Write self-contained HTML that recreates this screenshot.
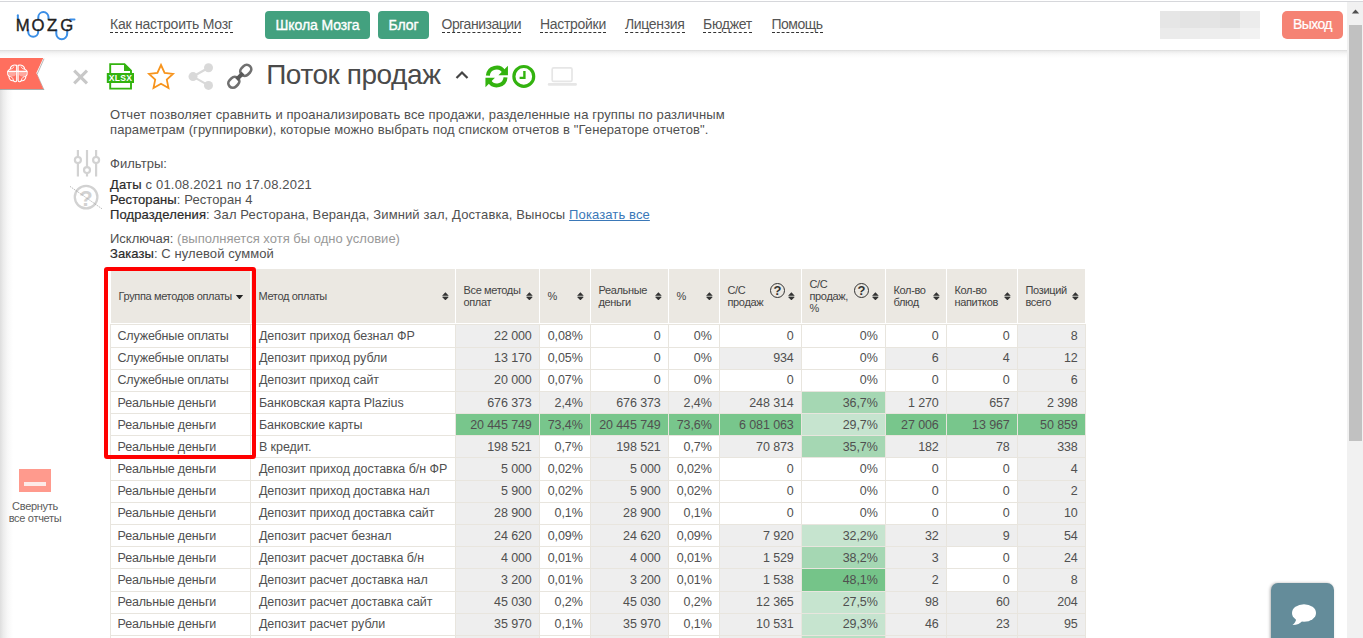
<!DOCTYPE html>
<html lang="ru">
<head>
<meta charset="utf-8">
<title>Поток продаж</title>
<style>
*{box-sizing:border-box;margin:0;padding:0}
html,body{width:1363px;height:638px;overflow:hidden;background:#fff}
body{font-family:"Liberation Sans",sans-serif;color:#444;position:relative;font-size:13px}
.abs{position:absolute}
/* top bar */
#topline{position:absolute;left:0;top:1px;width:1363px;height:1px;background:#d6d7db}
#topbar{position:absolute;left:0;top:2px;width:1347px;height:48px;background:#fff}
#tbshadow{position:absolute;left:0;top:50px;width:1347px;height:8px;background:linear-gradient(180deg,#dadada 0,#ececec 18%,#f6f6f6 45%,#fcfcfc 75%,#fff 100%)}
.nav{position:absolute;top:16px;font-size:14px;line-height:16px;color:#555;white-space:nowrap;border-bottom:1px dashed #333;height:17px;letter-spacing:-0.3px}
.btn{position:absolute;top:11px;height:28px;border-radius:4px;color:#fff;font-size:14px;line-height:28px;text-align:center;white-space:nowrap;letter-spacing:-0.1px;-webkit-text-stroke:0.35px #fff}
.g{background:#43a17f}
.rd{background:#f58374}
#blur{position:absolute;left:1160px;top:11px;width:100px;height:28px;background:#ebebeb}
#blur i{position:absolute;display:block;width:20px}
#blur i.a{top:0;height:17px}
#blur i.b{top:17px;height:11px}
/* left edge shadow */
#lshadow{position:absolute;left:0;top:89px;width:13px;height:549px;background:linear-gradient(90deg,#dedede 0,#ececec 25%,#f8f8f8 60%,#fff 100%)}
/* scrollbar */
#sb{position:absolute;left:1347px;top:2px;width:16px;height:636px;background:#f1f1f1}
#sbthumb{position:absolute;left:1349px;top:25px;width:13px;height:416px;background:#c1c1c1}
/* title */
#title{position:absolute;left:266.200px;top:58.300px;font-size:28px;line-height:34px;color:#4a4a4a;white-space:nowrap;letter-spacing:-0.44px}
.p{position:absolute;left:110px;font-size:13px;line-height:15px;white-space:nowrap;color:#505050;letter-spacing:0.11px}
.p b{font-weight:normal;color:#2a2a2a;-webkit-text-stroke:0.2px #2a2a2a}
.p a{color:#3a78b8;text-decoration:underline}
.p .m{color:#999}
/* table */
.th{position:absolute;background:#ebe8e2;font-size:11px;line-height:12.3px;color:#444;letter-spacing:-0.35px}
.th .ht{position:absolute;left:7.5px;top:50%;transform:translateY(-50%);white-space:nowrap}
.srt{position:absolute;right:5.800px;top:50%;margin-top:-3.900px;width:6.800px;height:8.600px;fill:#333}
.srtd{position:absolute;right:6.500px;top:50%;margin-top:-1px;width:9px;height:4.500px;fill:#222}
.hq{position:absolute;right:15.800px;top:13.600px;width:15.700px;height:15.700px;border:1.400px solid #333;border-radius:50%;font-size:13px;line-height:13px;text-align:center;font-weight:bold;color:#333}
.tr{position:absolute;left:0;width:1363px;height:23.18px}
.td{position:absolute;top:0;height:23.18px;border:1px solid #e8e5de;font-size:12.500px;line-height:16px;white-space:nowrap;color:#505050;letter-spacing:-0.2px;overflow:hidden}
.td span{position:absolute;left:0;right:0;display:block;height:16px}
.td.l{background:#fff;letter-spacing:-0.16px}
.td.l span{padding-left:6.500px}
.td.l2{letter-spacing:-0.05px}
.td.l2 span{padding-left:7.900px}
.td.r{text-align:right;letter-spacing:-0.1px}
.td.r span{padding-right:7.300px}
#redbox{position:absolute;left:104px;top:267px;width:152px;height:192px;border:4px solid #f00;border-radius:3px}
/* sidebar */
#collapse{position:absolute;left:19px;top:469px;width:32px;height:22.600px;background:#ff9a8d}
#collapse i{position:absolute;left:5px;top:12.500px;width:22px;height:4px;background:#fdebe8;display:block}
#colltxt{position:absolute;left:0;top:500px;width:70px;text-align:center;font-size:11px;line-height:12px;color:#5c5c5c;letter-spacing:-0.3px}
#chat{position:absolute;left:1271px;top:583px;width:63px;height:70px;border-radius:7px;background:#648c9a;box-shadow:-1px 0 3px rgba(0,0,0,.3)}
</style>
</head>
<body>
<div id="lshadow"></div>
<div class="th" style="left:111px;width:139.0px;top:269.0px;height:53.5px"><span class="ht">Группа методов оплаты</span><svg class="srtd" viewBox="0 0 8 5"><path d="M0 0 H8 L4 5 Z"/></svg></div>
<div class="th" style="left:251px;width:204.0px;top:269.0px;height:53.5px"><span class="ht">Метод оплаты</span><svg class="srt" viewBox="0 0 8 10"><rect x="0.600" y="4.300" width="6.800" height="1.400" fill="#9a9c98"/><path d="M4 0.200 L7.900 4.300 H0.100 Z M4 9.800 L7.900 5.700 H0.100 Z"/></svg></div>
<div class="th" style="left:456px;width:83.0px;top:269.0px;height:53.5px"><span class="ht">Все методы<br>оплат</span><svg class="srt" viewBox="0 0 8 10"><rect x="0.600" y="4.300" width="6.800" height="1.400" fill="#9a9c98"/><path d="M4 0.200 L7.900 4.300 H0.100 Z M4 9.800 L7.900 5.700 H0.100 Z"/></svg></div>
<div class="th" style="left:540px;width:50.0px;top:269.0px;height:53.5px"><span class="ht">%</span><svg class="srt" viewBox="0 0 8 10"><rect x="0.600" y="4.300" width="6.800" height="1.400" fill="#9a9c98"/><path d="M4 0.200 L7.900 4.300 H0.100 Z M4 9.800 L7.900 5.700 H0.100 Z"/></svg></div>
<div class="th" style="left:591px;width:77.0px;top:269.0px;height:53.5px"><span class="ht">Реальные<br>деньги</span><svg class="srt" viewBox="0 0 8 10"><rect x="0.600" y="4.300" width="6.800" height="1.400" fill="#9a9c98"/><path d="M4 0.200 L7.900 4.300 H0.100 Z M4 9.800 L7.900 5.700 H0.100 Z"/></svg></div>
<div class="th" style="left:669px;width:50.0px;top:269.0px;height:53.5px"><span class="ht">%</span><svg class="srt" viewBox="0 0 8 10"><rect x="0.600" y="4.300" width="6.800" height="1.400" fill="#9a9c98"/><path d="M4 0.200 L7.900 4.300 H0.100 Z M4 9.800 L7.900 5.700 H0.100 Z"/></svg></div>
<div class="th" style="left:720px;width:81.0px;top:269.0px;height:53.5px"><span class="ht">С/С<br>продаж</span><svg class="srt" viewBox="0 0 8 10"><rect x="0.600" y="4.300" width="6.800" height="1.400" fill="#9a9c98"/><path d="M4 0.200 L7.900 4.300 H0.100 Z M4 9.800 L7.900 5.700 H0.100 Z"/></svg><span class="hq">?</span></div>
<div class="th" style="left:802px;width:83.0px;top:269.0px;height:53.5px"><span class="ht">С/С<br>продаж,<br>%</span><svg class="srt" viewBox="0 0 8 10"><rect x="0.600" y="4.300" width="6.800" height="1.400" fill="#9a9c98"/><path d="M4 0.200 L7.900 4.300 H0.100 Z M4 9.800 L7.900 5.700 H0.100 Z"/></svg><span class="hq">?</span></div>
<div class="th" style="left:886px;width:60.0px;top:269.0px;height:53.5px"><span class="ht">Кол-во<br>блюд</span><svg class="srt" viewBox="0 0 8 10"><rect x="0.600" y="4.300" width="6.800" height="1.400" fill="#9a9c98"/><path d="M4 0.200 L7.900 4.300 H0.100 Z M4 9.800 L7.900 5.700 H0.100 Z"/></svg></div>
<div class="th" style="left:947px;width:70.0px;top:269.0px;height:53.5px"><span class="ht">Кол-во<br>напитков</span><svg class="srt" viewBox="0 0 8 10"><rect x="0.600" y="4.300" width="6.800" height="1.400" fill="#9a9c98"/><path d="M4 0.200 L7.900 4.300 H0.100 Z M4 9.800 L7.900 5.700 H0.100 Z"/></svg></div>
<div class="th" style="left:1018px;width:67.0px;top:269.0px;height:53.5px"><span class="ht">Позиций<br>всего</span><svg class="srt" viewBox="0 0 8 10"><rect x="0.600" y="4.300" width="6.800" height="1.400" fill="#9a9c98"/><path d="M4 0.200 L7.900 4.300 H0.100 Z M4 9.800 L7.900 5.700 H0.100 Z"/></svg></div>
<div class="tr" style="top:324.40px">
<div class="td l" style="left:110px;width:141px"><span style="top:2.60px">Служебные оплаты</span></div>
<div class="td l l2" style="left:250px;width:206px"><span style="top:2.60px">Депозит приход безнал ФР</span></div>
<div class="td r" style="left:455px;width:85px;background:#eeeeee"><span style="top:2.60px">22 000</span></div>
<div class="td r" style="left:539px;width:52px;background:#ffffff"><span style="top:2.60px">0,08%</span></div>
<div class="td r" style="left:590px;width:79px;background:#ffffff"><span style="top:2.60px">0</span></div>
<div class="td r" style="left:668px;width:52px;background:#ffffff"><span style="top:2.60px">0%</span></div>
<div class="td r" style="left:719px;width:83px;background:#ffffff"><span style="top:2.60px">0</span></div>
<div class="td r" style="left:801px;width:85px;background:#ffffff"><span style="top:2.60px">0%</span></div>
<div class="td r" style="left:885px;width:62px;background:#ffffff"><span style="top:2.60px">0</span></div>
<div class="td r" style="left:946px;width:72px;background:#ffffff"><span style="top:2.60px">0</span></div>
<div class="td r" style="left:1017px;width:69px;background:#eeeeee"><span style="top:2.60px">8</span></div>
</div>
<div class="tr" style="top:346.58px">
<div class="td l" style="left:110px;width:141px"><span style="top:2.42px">Служебные оплаты</span></div>
<div class="td l l2" style="left:250px;width:206px"><span style="top:2.42px">Депозит приход рубли</span></div>
<div class="td r" style="left:455px;width:85px;background:#eeeeee"><span style="top:2.42px">13 170</span></div>
<div class="td r" style="left:539px;width:52px;background:#ffffff"><span style="top:2.42px">0,05%</span></div>
<div class="td r" style="left:590px;width:79px;background:#ffffff"><span style="top:2.42px">0</span></div>
<div class="td r" style="left:668px;width:52px;background:#ffffff"><span style="top:2.42px">0%</span></div>
<div class="td r" style="left:719px;width:83px;background:#eeeeee"><span style="top:2.42px">934</span></div>
<div class="td r" style="left:801px;width:85px;background:#ffffff"><span style="top:2.42px">0%</span></div>
<div class="td r" style="left:885px;width:62px;background:#eeeeee"><span style="top:2.42px">6</span></div>
<div class="td r" style="left:946px;width:72px;background:#eeeeee"><span style="top:2.42px">4</span></div>
<div class="td r" style="left:1017px;width:69px;background:#eeeeee"><span style="top:2.42px">12</span></div>
</div>
<div class="tr" style="top:368.76px">
<div class="td l" style="left:110px;width:141px"><span style="top:2.24px">Служебные оплаты</span></div>
<div class="td l l2" style="left:250px;width:206px"><span style="top:2.24px">Депозит приход сайт</span></div>
<div class="td r" style="left:455px;width:85px;background:#eeeeee"><span style="top:2.24px">20 000</span></div>
<div class="td r" style="left:539px;width:52px;background:#ffffff"><span style="top:2.24px">0,07%</span></div>
<div class="td r" style="left:590px;width:79px;background:#ffffff"><span style="top:2.24px">0</span></div>
<div class="td r" style="left:668px;width:52px;background:#ffffff"><span style="top:2.24px">0%</span></div>
<div class="td r" style="left:719px;width:83px;background:#ffffff"><span style="top:2.24px">0</span></div>
<div class="td r" style="left:801px;width:85px;background:#ffffff"><span style="top:2.24px">0%</span></div>
<div class="td r" style="left:885px;width:62px;background:#ffffff"><span style="top:2.24px">0</span></div>
<div class="td r" style="left:946px;width:72px;background:#ffffff"><span style="top:2.24px">0</span></div>
<div class="td r" style="left:1017px;width:69px;background:#eeeeee"><span style="top:2.24px">6</span></div>
</div>
<div class="tr" style="top:390.94px">
<div class="td l" style="left:110px;width:141px"><span style="top:3.06px">Реальные деньги</span></div>
<div class="td l l2" style="left:250px;width:206px"><span style="top:3.06px">Банковская карта Plazius</span></div>
<div class="td r" style="left:455px;width:85px;background:#eeeeee"><span style="top:3.06px">676 373</span></div>
<div class="td r" style="left:539px;width:52px;background:#eeeeee"><span style="top:3.06px">2,4%</span></div>
<div class="td r" style="left:590px;width:79px;background:#eeeeee"><span style="top:3.06px">676 373</span></div>
<div class="td r" style="left:668px;width:52px;background:#eeeeee"><span style="top:3.06px">2,4%</span></div>
<div class="td r" style="left:719px;width:83px;background:#eeeeee"><span style="top:3.06px">248 314</span></div>
<div class="td r" style="left:801px;width:85px;background:#a5d7b3"><span style="top:3.06px">36,7%</span></div>
<div class="td r" style="left:885px;width:62px;background:#eeeeee"><span style="top:3.06px">1 270</span></div>
<div class="td r" style="left:946px;width:72px;background:#eeeeee"><span style="top:3.06px">657</span></div>
<div class="td r" style="left:1017px;width:69px;background:#eeeeee"><span style="top:3.06px">2 398</span></div>
</div>
<div class="tr" style="top:413.12px">
<div class="td l" style="left:110px;width:141px"><span style="top:2.88px">Реальные деньги</span></div>
<div class="td l l2" style="left:250px;width:206px"><span style="top:2.88px">Банковские карты</span></div>
<div class="td r" style="left:455px;width:85px;background:#78c68c"><span style="top:2.88px">20 445 749</span></div>
<div class="td r" style="left:539px;width:52px;background:#78c68c"><span style="top:2.88px">73,4%</span></div>
<div class="td r" style="left:590px;width:79px;background:#78c68c"><span style="top:2.88px">20 445 749</span></div>
<div class="td r" style="left:668px;width:52px;background:#78c68c"><span style="top:2.88px">73,6%</span></div>
<div class="td r" style="left:719px;width:83px;background:#78c68c"><span style="top:2.88px">6 081 063</span></div>
<div class="td r" style="left:801px;width:85px;background:#c6e4cf"><span style="top:2.88px">29,7%</span></div>
<div class="td r" style="left:885px;width:62px;background:#78c68c"><span style="top:2.88px">27 006</span></div>
<div class="td r" style="left:946px;width:72px;background:#78c68c"><span style="top:2.88px">13 967</span></div>
<div class="td r" style="left:1017px;width:69px;background:#78c68c"><span style="top:2.88px">50 859</span></div>
</div>
<div class="tr" style="top:435.30px">
<div class="td l" style="left:110px;width:141px"><span style="top:2.70px">Реальные деньги</span></div>
<div class="td l l2" style="left:250px;width:206px"><span style="top:2.70px">В кредит.</span></div>
<div class="td r" style="left:455px;width:85px;background:#eeeeee"><span style="top:2.70px">198 521</span></div>
<div class="td r" style="left:539px;width:52px;background:#ffffff"><span style="top:2.70px">0,7%</span></div>
<div class="td r" style="left:590px;width:79px;background:#eeeeee"><span style="top:2.70px">198 521</span></div>
<div class="td r" style="left:668px;width:52px;background:#ffffff"><span style="top:2.70px">0,7%</span></div>
<div class="td r" style="left:719px;width:83px;background:#eeeeee"><span style="top:2.70px">70 873</span></div>
<div class="td r" style="left:801px;width:85px;background:#a5d7b3"><span style="top:2.70px">35,7%</span></div>
<div class="td r" style="left:885px;width:62px;background:#eeeeee"><span style="top:2.70px">182</span></div>
<div class="td r" style="left:946px;width:72px;background:#eeeeee"><span style="top:2.70px">78</span></div>
<div class="td r" style="left:1017px;width:69px;background:#eeeeee"><span style="top:2.70px">338</span></div>
</div>
<div class="tr" style="top:457.48px">
<div class="td l" style="left:110px;width:141px"><span style="top:2.52px">Реальные деньги</span></div>
<div class="td l l2" style="left:250px;width:206px"><span style="top:2.52px">Депозит приход доставка б/н ФР</span></div>
<div class="td r" style="left:455px;width:85px;background:#eeeeee"><span style="top:2.52px">5 000</span></div>
<div class="td r" style="left:539px;width:52px;background:#ffffff"><span style="top:2.52px">0,02%</span></div>
<div class="td r" style="left:590px;width:79px;background:#eeeeee"><span style="top:2.52px">5 000</span></div>
<div class="td r" style="left:668px;width:52px;background:#ffffff"><span style="top:2.52px">0,02%</span></div>
<div class="td r" style="left:719px;width:83px;background:#ffffff"><span style="top:2.52px">0</span></div>
<div class="td r" style="left:801px;width:85px;background:#ffffff"><span style="top:2.52px">0%</span></div>
<div class="td r" style="left:885px;width:62px;background:#ffffff"><span style="top:2.52px">0</span></div>
<div class="td r" style="left:946px;width:72px;background:#ffffff"><span style="top:2.52px">0</span></div>
<div class="td r" style="left:1017px;width:69px;background:#eeeeee"><span style="top:2.52px">4</span></div>
</div>
<div class="tr" style="top:479.66px">
<div class="td l" style="left:110px;width:141px"><span style="top:2.34px">Реальные деньги</span></div>
<div class="td l l2" style="left:250px;width:206px"><span style="top:2.34px">Депозит приход доставка нал</span></div>
<div class="td r" style="left:455px;width:85px;background:#eeeeee"><span style="top:2.34px">5 900</span></div>
<div class="td r" style="left:539px;width:52px;background:#ffffff"><span style="top:2.34px">0,02%</span></div>
<div class="td r" style="left:590px;width:79px;background:#eeeeee"><span style="top:2.34px">5 900</span></div>
<div class="td r" style="left:668px;width:52px;background:#ffffff"><span style="top:2.34px">0,02%</span></div>
<div class="td r" style="left:719px;width:83px;background:#ffffff"><span style="top:2.34px">0</span></div>
<div class="td r" style="left:801px;width:85px;background:#ffffff"><span style="top:2.34px">0%</span></div>
<div class="td r" style="left:885px;width:62px;background:#ffffff"><span style="top:2.34px">0</span></div>
<div class="td r" style="left:946px;width:72px;background:#ffffff"><span style="top:2.34px">0</span></div>
<div class="td r" style="left:1017px;width:69px;background:#eeeeee"><span style="top:2.34px">2</span></div>
</div>
<div class="tr" style="top:501.84px">
<div class="td l" style="left:110px;width:141px"><span style="top:2.16px">Реальные деньги</span></div>
<div class="td l l2" style="left:250px;width:206px"><span style="top:2.16px">Депозит приход доставка сайт</span></div>
<div class="td r" style="left:455px;width:85px;background:#eeeeee"><span style="top:2.16px">28 900</span></div>
<div class="td r" style="left:539px;width:52px;background:#ffffff"><span style="top:2.16px">0,1%</span></div>
<div class="td r" style="left:590px;width:79px;background:#eeeeee"><span style="top:2.16px">28 900</span></div>
<div class="td r" style="left:668px;width:52px;background:#ffffff"><span style="top:2.16px">0,1%</span></div>
<div class="td r" style="left:719px;width:83px;background:#ffffff"><span style="top:2.16px">0</span></div>
<div class="td r" style="left:801px;width:85px;background:#ffffff"><span style="top:2.16px">0%</span></div>
<div class="td r" style="left:885px;width:62px;background:#ffffff"><span style="top:2.16px">0</span></div>
<div class="td r" style="left:946px;width:72px;background:#ffffff"><span style="top:2.16px">0</span></div>
<div class="td r" style="left:1017px;width:69px;background:#eeeeee"><span style="top:2.16px">10</span></div>
</div>
<div class="tr" style="top:524.02px">
<div class="td l" style="left:110px;width:141px"><span style="top:2.98px">Реальные деньги</span></div>
<div class="td l l2" style="left:250px;width:206px"><span style="top:2.98px">Депозит расчет безнал</span></div>
<div class="td r" style="left:455px;width:85px;background:#eeeeee"><span style="top:2.98px">24 620</span></div>
<div class="td r" style="left:539px;width:52px;background:#ffffff"><span style="top:2.98px">0,09%</span></div>
<div class="td r" style="left:590px;width:79px;background:#eeeeee"><span style="top:2.98px">24 620</span></div>
<div class="td r" style="left:668px;width:52px;background:#ffffff"><span style="top:2.98px">0,09%</span></div>
<div class="td r" style="left:719px;width:83px;background:#eeeeee"><span style="top:2.98px">7 920</span></div>
<div class="td r" style="left:801px;width:85px;background:#c6e4cf"><span style="top:2.98px">32,2%</span></div>
<div class="td r" style="left:885px;width:62px;background:#eeeeee"><span style="top:2.98px">32</span></div>
<div class="td r" style="left:946px;width:72px;background:#eeeeee"><span style="top:2.98px">9</span></div>
<div class="td r" style="left:1017px;width:69px;background:#eeeeee"><span style="top:2.98px">54</span></div>
</div>
<div class="tr" style="top:546.20px">
<div class="td l" style="left:110px;width:141px"><span style="top:2.80px">Реальные деньги</span></div>
<div class="td l l2" style="left:250px;width:206px"><span style="top:2.80px">Депозит расчет доставка б/н</span></div>
<div class="td r" style="left:455px;width:85px;background:#eeeeee"><span style="top:2.80px">4 000</span></div>
<div class="td r" style="left:539px;width:52px;background:#ffffff"><span style="top:2.80px">0,01%</span></div>
<div class="td r" style="left:590px;width:79px;background:#eeeeee"><span style="top:2.80px">4 000</span></div>
<div class="td r" style="left:668px;width:52px;background:#ffffff"><span style="top:2.80px">0,01%</span></div>
<div class="td r" style="left:719px;width:83px;background:#eeeeee"><span style="top:2.80px">1 529</span></div>
<div class="td r" style="left:801px;width:85px;background:#a5d7b3"><span style="top:2.80px">38,2%</span></div>
<div class="td r" style="left:885px;width:62px;background:#eeeeee"><span style="top:2.80px">3</span></div>
<div class="td r" style="left:946px;width:72px;background:#ffffff"><span style="top:2.80px">0</span></div>
<div class="td r" style="left:1017px;width:69px;background:#eeeeee"><span style="top:2.80px">24</span></div>
</div>
<div class="tr" style="top:568.38px">
<div class="td l" style="left:110px;width:141px"><span style="top:2.62px">Реальные деньги</span></div>
<div class="td l l2" style="left:250px;width:206px"><span style="top:2.62px">Депозит расчет доставка нал</span></div>
<div class="td r" style="left:455px;width:85px;background:#eeeeee"><span style="top:2.62px">3 200</span></div>
<div class="td r" style="left:539px;width:52px;background:#ffffff"><span style="top:2.62px">0,01%</span></div>
<div class="td r" style="left:590px;width:79px;background:#eeeeee"><span style="top:2.62px">3 200</span></div>
<div class="td r" style="left:668px;width:52px;background:#ffffff"><span style="top:2.62px">0,01%</span></div>
<div class="td r" style="left:719px;width:83px;background:#eeeeee"><span style="top:2.62px">1 538</span></div>
<div class="td r" style="left:801px;width:85px;background:#75c489"><span style="top:2.62px">48,1%</span></div>
<div class="td r" style="left:885px;width:62px;background:#eeeeee"><span style="top:2.62px">2</span></div>
<div class="td r" style="left:946px;width:72px;background:#ffffff"><span style="top:2.62px">0</span></div>
<div class="td r" style="left:1017px;width:69px;background:#eeeeee"><span style="top:2.62px">8</span></div>
</div>
<div class="tr" style="top:590.56px">
<div class="td l" style="left:110px;width:141px"><span style="top:2.44px">Реальные деньги</span></div>
<div class="td l l2" style="left:250px;width:206px"><span style="top:2.44px">Депозит расчет доставка сайт</span></div>
<div class="td r" style="left:455px;width:85px;background:#eeeeee"><span style="top:2.44px">45 030</span></div>
<div class="td r" style="left:539px;width:52px;background:#ffffff"><span style="top:2.44px">0,2%</span></div>
<div class="td r" style="left:590px;width:79px;background:#eeeeee"><span style="top:2.44px">45 030</span></div>
<div class="td r" style="left:668px;width:52px;background:#ffffff"><span style="top:2.44px">0,2%</span></div>
<div class="td r" style="left:719px;width:83px;background:#eeeeee"><span style="top:2.44px">12 365</span></div>
<div class="td r" style="left:801px;width:85px;background:#c6e4cf"><span style="top:2.44px">27,5%</span></div>
<div class="td r" style="left:885px;width:62px;background:#eeeeee"><span style="top:2.44px">98</span></div>
<div class="td r" style="left:946px;width:72px;background:#eeeeee"><span style="top:2.44px">60</span></div>
<div class="td r" style="left:1017px;width:69px;background:#eeeeee"><span style="top:2.44px">204</span></div>
</div>
<div class="tr" style="top:612.74px">
<div class="td l" style="left:110px;width:141px"><span style="top:2.26px">Реальные деньги</span></div>
<div class="td l l2" style="left:250px;width:206px"><span style="top:2.26px">Депозит расчет рубли</span></div>
<div class="td r" style="left:455px;width:85px;background:#eeeeee"><span style="top:2.26px">35 970</span></div>
<div class="td r" style="left:539px;width:52px;background:#ffffff"><span style="top:2.26px">0,1%</span></div>
<div class="td r" style="left:590px;width:79px;background:#eeeeee"><span style="top:2.26px">35 970</span></div>
<div class="td r" style="left:668px;width:52px;background:#ffffff"><span style="top:2.26px">0,1%</span></div>
<div class="td r" style="left:719px;width:83px;background:#eeeeee"><span style="top:2.26px">10 531</span></div>
<div class="td r" style="left:801px;width:85px;background:#c6e4cf"><span style="top:2.26px">29,3%</span></div>
<div class="td r" style="left:885px;width:62px;background:#eeeeee"><span style="top:2.26px">46</span></div>
<div class="td r" style="left:946px;width:72px;background:#eeeeee"><span style="top:2.26px">23</span></div>
<div class="td r" style="left:1017px;width:69px;background:#eeeeee"><span style="top:2.26px">95</span></div>
</div>
<div class="tr" style="top:634.92px">
<div class="td l" style="left:110px;width:141px"><span style="top:3.08px"></span></div>
<div class="td l l2" style="left:250px;width:206px"><span style="top:3.08px"></span></div>
<div class="td r" style="left:455px;width:85px;background:#eeeeee"><span style="top:3.08px"></span></div>
<div class="td r" style="left:539px;width:52px;background:#ffffff"><span style="top:3.08px"></span></div>
<div class="td r" style="left:590px;width:79px;background:#eeeeee"><span style="top:3.08px"></span></div>
<div class="td r" style="left:668px;width:52px;background:#ffffff"><span style="top:3.08px"></span></div>
<div class="td r" style="left:719px;width:83px;background:#eeeeee"><span style="top:3.08px"></span></div>
<div class="td r" style="left:801px;width:85px;background:#b8dfc3"><span style="top:3.08px"></span></div>
<div class="td r" style="left:885px;width:62px;background:#eeeeee"><span style="top:3.08px"></span></div>
<div class="td r" style="left:946px;width:72px;background:#eeeeee"><span style="top:3.08px"></span></div>
<div class="td r" style="left:1017px;width:69px;background:#eeeeee"><span style="top:3.08px"></span></div>
</div>
<div id="redbox"></div>

<div id="topbar"></div><div id="tbshadow"></div>
<div id="topline"></div>
<div id="sb"></div><div id="sbthumb"></div>
<svg class="abs" style="left:1351px;top:8.500px" width="9" height="5.500" viewBox="0 0 9 6"><path d="M4.5 0.5 L8.5 5 H0.5 Z" fill="#505050"/></svg>

<!-- logo -->
<svg class="abs" style="left:0;top:0" width="90" height="50" viewBox="0 0 90 50">
 <g fill="none" stroke="#3a8ee6" stroke-width="2" stroke-linecap="round">
  <path d="M17.85 15.3 V19"/>
  <path d="M28.2 30 V31.8 A5 5 0 0 0 38.2 31.8 V30"/>
  <path d="M38.3 19 V17.2 A5.1 5.1 0 0 1 48.5 17.2 V19"/>
  <path d="M56.3 30 V33.8 A5.45 5.45 0 0 0 67.2 33.8 V30"/>
  <path d="M70 19.6 H74.5"/>
 </g>
 <text y="30.7" x="15.7 31.5 47.1 60.2" font-family="Liberation Sans, sans-serif" font-size="16.7" fill="#222" stroke="#222" stroke-width="0.35">MOZG</text>
</svg>

<div class="nav" style="left:110px;letter-spacing:-0.23px">Как настроить Мозг</div>
<div class="btn g" style="left:265px;width:105px">Школа Мозга</div>
<div class="btn g" style="left:378px;width:51px">Блог</div>
<div class="nav" style="left:441.500px;letter-spacing:-0.47px">Организации</div>
<div class="nav" style="left:540px;letter-spacing:-0.3px">Настройки</div>
<div class="nav" style="left:625px;letter-spacing:-0.34px">Лицензия</div>
<div class="nav" style="left:703px;letter-spacing:-0.28px">Бюджет</div>
<div class="nav" style="left:771.500px;letter-spacing:-0.51px">Помощь</div>
<div id="blur"><i class="a" style="left:0;background:#e6e6e6"></i><i class="a" style="left:20px;background:#e3e3e3"></i><i class="a" style="left:40px;background:#e4e4e4"></i><i class="a" style="left:60px;background:#e0e0e0"></i><i class="a" style="left:80px;background:#ececec"></i><i class="b" style="left:0;background:#ebebeb"></i><i class="b" style="left:20px;background:#ececec"></i><i class="b" style="left:40px;background:#ededed"></i><i class="b" style="left:60px;background:#ededed"></i><i class="b" style="left:80px;background:#f2f2f2"></i></div>
<div class="btn rd" style="left:1282px;width:61px;height:28px;line-height:26.500px;letter-spacing:-0.6px;border-radius:5px;-webkit-text-stroke:0.2px #fff">Выход</div>

<!-- flag -->
<svg class="abs" style="left:0;top:58px" width="46" height="33" viewBox="0 0 46 33">
 <path d="M44 32 L37 16.5 L44 0.8" fill="none" stroke="#9a9a9a" stroke-width="1" opacity=".7"/>
 <path d="M0 31.500 H43.800" fill="none" stroke="#8a8a8a" stroke-width="1" opacity=".7"/>
 <path d="M0 0 H43.3 L36.3 15 L43.3 31.100 H0 Z" fill="#ff6f5e"/>
 <g fill="none" stroke="#fff" stroke-width="1.15" stroke-linejoin="round">
  <path d="M16.700 7.400 C13.500 6.200 10 8.200 10.200 11 C7.300 12 6.800 16.500 9 18.300 C8.700 21.300 11.300 23.300 13.500 22.600 C14.500 24.300 16.700 24 16.700 22.300 Z"/>
  <path d="M18.100 7.400 C21.300 6.200 24.800 8.200 24.600 11 C27.500 12 28 16.500 25.800 18.300 C26.100 21.300 23.500 23.300 21.300 22.600 C20.300 24.300 18.100 24 18.100 22.300 Z"/>
  <path d="M7.300 13.400 H27.500" stroke-width="1.400"/>
  <path d="M10.200 11 C12 11 13.500 10 13.800 8.500 M24.600 11 C22.800 11 21.300 10 21 8.500 M9 18.300 C11 18.300 13 19.500 13.500 22.600 M25.800 18.300 C23.800 18.300 21.800 19.500 21.300 22.600" stroke-width="0.9"/>
 </g>
 <ellipse cx="12.300" cy="15.800" rx="3.600" ry="2.700" fill="#fff" opacity=".4"/>
 <ellipse cx="22.500" cy="15.800" rx="3.600" ry="2.700" fill="#fff" opacity=".4"/>
</svg>

<!-- toolbar icons -->
<svg class="abs" style="left:72px;top:68px" width="17" height="17" viewBox="0 0 17 17"><path d="M2.200 2.600 L15 15.300 M15 2.600 L2.200 15.300" stroke="#c8c8c8" stroke-width="3.100" fill="none"/></svg>
<svg class="abs" style="left:106px;top:62px" width="29" height="29" viewBox="0 0 29 29">
 <path d="M4.200 11.500 V2.100 H18.500 L25 8.600 V11.500 M25 20.500 V26.600 H4.200 V20.500" fill="none" stroke="#33b30f" stroke-width="1.9"/>
 <path d="M18 1.600 V9.100 H25.500 Z" fill="#33b30f"/>
 <rect x="0.800" y="11" width="27.200" height="10" fill="#33b30f"/>
 <text x="14.400" y="19.200" text-anchor="middle" font-family="Liberation Sans, sans-serif" font-weight="bold" font-size="8.600" fill="#fff" letter-spacing="0.25">XLSX</text>
</svg>
<svg class="abs" style="left:146px;top:62px" width="30" height="29" viewBox="0 0 30 29"><path d="M15 3 L18.600 10.800 L27 11.800 L20.800 17.600 L22.500 26 L15 21.800 L7.500 26 L9.200 17.600 L3 11.800 L11.400 10.800 Z" fill="none" stroke="#f7941d" stroke-width="1.800" stroke-linejoin="miter"/></svg>
<svg class="abs" style="left:188px;top:63px" width="27" height="28" viewBox="0 0 27 28"><path d="M20.500 4.800 L5 13.600 L20.500 22.400" fill="none" stroke="#d9d9d9" stroke-width="2.200"/><circle cx="20.500" cy="4.800" r="4.500" fill="#d9d9d9"/><circle cx="5" cy="13.600" r="4.500" fill="#d9d9d9"/><circle cx="20.500" cy="22.400" r="4.500" fill="#d9d9d9"/></svg>
<svg class="abs" style="left:226px;top:63px;overflow:visible" width="28" height="28" viewBox="0 0 28 28"><g fill="none" stroke="#707070" stroke-width="2.700" transform="rotate(-45 13.800 13.300)"><rect x="-0.550" y="8.800" width="11.800" height="9" rx="4.500"/><rect x="16.350" y="8.800" width="11.800" height="9" rx="4.500"/><path d="M9.300 13.300 H18.300" stroke="#595959" stroke-width="4"/></g></svg>

<div id="title">Поток продаж</div>
<svg class="abs" style="left:455px;top:70px" width="14" height="10" viewBox="0 0 14 10"><path d="M1.5 8 L7 2.5 L12.5 8" fill="none" stroke="#444" stroke-width="2.2"/></svg>
<!-- refresh -->
<svg class="abs" style="left:484.900px;top:64.900px" width="23.400" height="23" viewBox="0 0 27 26">
 <g fill="none" stroke="#33b30f" stroke-width="4.600">
  <path d="M3.300 12 A10 10 0 0 1 21.800 7.500"/>
  <path d="M23.700 14 A10 10 0 0 1 5.200 18.500"/>
 </g>
 <path d="M26.500 0.500 V11.500 H15.500 Z" fill="#33b30f"/>
 <path d="M0.500 25.500 V14.500 H11.500 Z" fill="#33b30f"/>
</svg>
<!-- clock -->
<svg class="abs" style="left:511px;top:63px" width="27" height="27" viewBox="0 0 27 27"><circle cx="12.800" cy="13.400" r="9.900" fill="none" stroke="#33b30f" stroke-width="3.200"/><path d="M13.400 7.900 V14.900 H8.600" fill="none" stroke="#33b30f" stroke-width="2.400"/></svg>
<!-- laptop -->
<svg class="abs" style="left:547px;top:66px" width="31" height="21" viewBox="0 0 31 21"><rect x="5.200" y="1.800" width="19.800" height="13.600" rx="1.500" fill="none" stroke="#e6e6e6" stroke-width="1.700"/><rect x="0.800" y="17" width="29.100" height="2.800" rx="1.200" fill="#e6e6e6"/></svg>

<div class="p" style="top:107px">Отчет позволяет сравнить и проанализировать все продажи, разделенные на группы по различным</div>
<div class="p" style="top:122px">параметрам (группировки), которые можно выбрать под списком отчетов в "Генераторе отчетов".</div>

<!-- filter icons -->
<svg class="abs" style="left:70px;top:146px" width="36" height="34" viewBox="0 0 36 34"><g fill="#fff" stroke="#d2d2d2" stroke-width="2.200"><path d="M7.900 4 V30.600 M17 4 V30.600 M26.100 4 V30.600" fill="none"/><circle cx="7.900" cy="14" r="3"/><circle cx="17" cy="24.100" r="3"/><circle cx="26.100" cy="14" r="3"/></g></svg>
<svg class="abs" style="left:66px;top:180px" width="40" height="34" viewBox="0 0 40 34"><circle cx="20.100" cy="17.100" r="11.300" fill="#fff" stroke="#d2d2d2" stroke-width="2.300"/><text x="20.100" y="25.500" text-anchor="middle" font-family="Liberation Sans, sans-serif" font-weight="bold" font-size="22" fill="#d2d2d2">?</text><path d="M4 6.400 L36 28.800" stroke="#8a8a8a" stroke-width="0.600" stroke-dasharray="1.500 1"/></svg>

<div class="p" style="top:156px;letter-spacing:0.045px">Фильтры:</div>
<div class="p" style="top:176.500px;letter-spacing:0.18px"><b>Даты</b> с 01.08.2021 по 17.08.2021</div>
<div class="p" style="top:191.500px;letter-spacing:0.1px"><b>Рестораны</b>: Ресторан 4</div>
<div class="p" style="top:206.500px;letter-spacing:0.12px"><b>Подразделения</b>: Зал Ресторана, Веранда, Зимний зал, Доставка, Выносы <a>Показать все</a></div>
<div class="p" style="top:230.500px;letter-spacing:0.01px">Исключая: <span class="m">(выполняется хотя бы одно условие)</span></div>
<div class="p" style="top:245.500px;letter-spacing:0.08px"><b>Заказы</b>: С нулевой суммой</div>

<div id="collapse"><i></i></div>
<div id="colltxt">Свернуть<br>все отчеты</div>

<div id="chat"></div>
<svg class="abs" style="left:1289.600px;top:603px" width="28" height="24" viewBox="0 0 28 24"><ellipse cx="14" cy="10" rx="12" ry="8.800" fill="#fff"/><path d="M6.500 15 C6 18.500 4.500 20.500 2.500 22 C7 22 10.500 20.500 12.500 17.500 Z" fill="#fff"/></svg>
</body>
</html>
